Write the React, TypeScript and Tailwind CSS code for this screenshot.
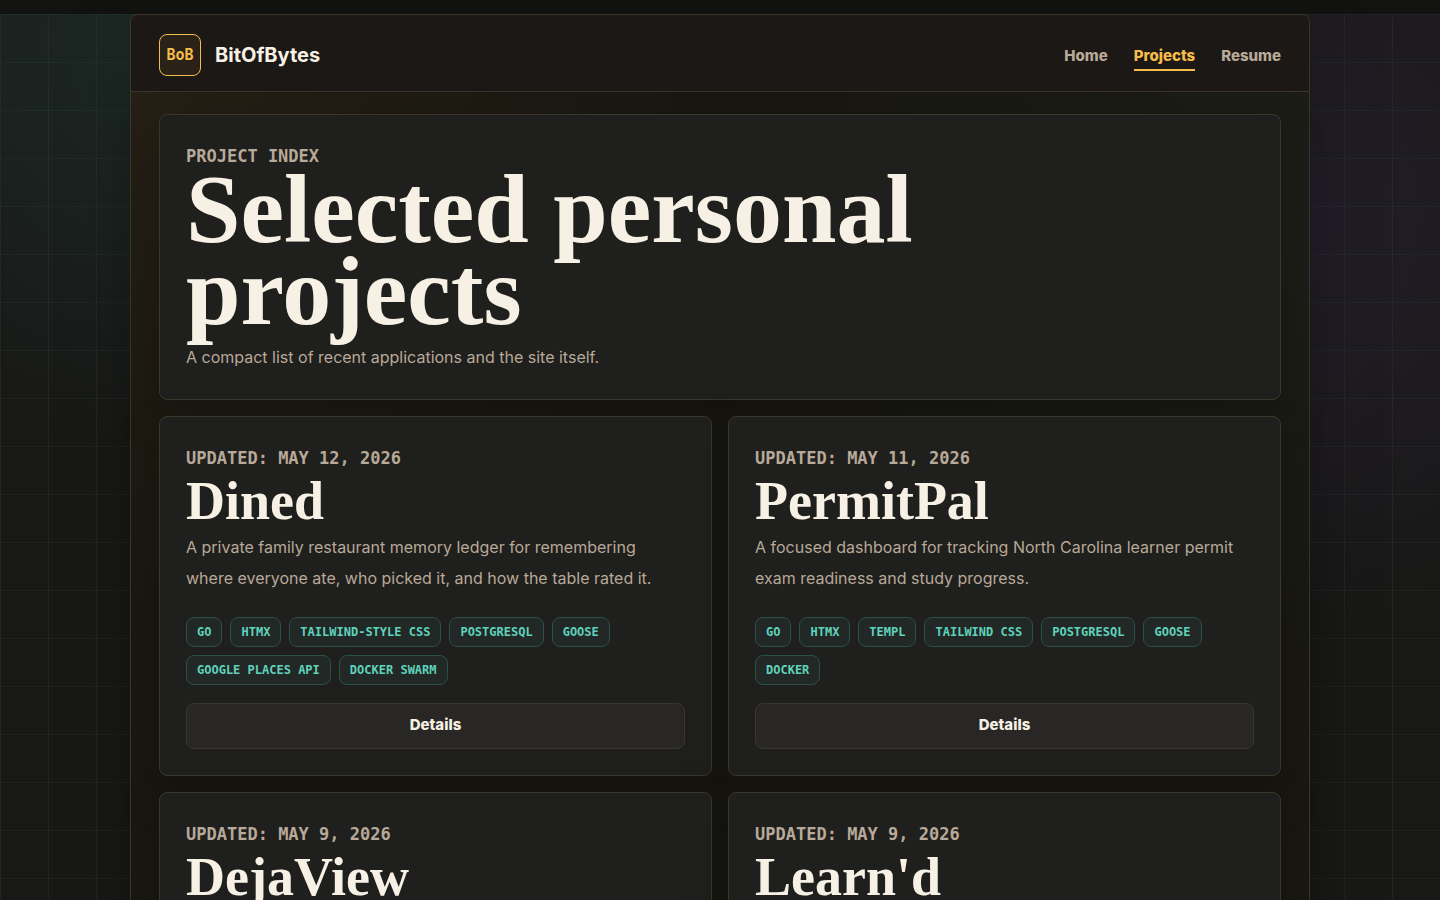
type Project = {
  name: string;
  updated: string;
  summary?: string;
  tags?: string[];
};

const projects: Project[] = [
  {
    name: "Dined",
    updated: "May 12, 2026",
    summary:
      "A private family restaurant memory ledger for remembering where everyone ate, who picked it, and how the table rated it.",
    tags: ["Go", "HTMX", "Tailwind-style CSS", "PostgreSQL", "Goose", "Google Places API", "Docker Swarm"],
  },
  {
    name: "PermitPal",
    updated: "May 11, 2026",
    summary: "A focused dashboard for tracking North Carolina learner permit exam readiness and study progress.",
    tags: ["Go", "HTMX", "Templ", "Tailwind CSS", "PostgreSQL", "Goose", "Docker"],
  },
  { name: "DejaView", updated: "May 9, 2026" },
  { name: "Learn'd", updated: "May 9, 2026" },
];

const nav = [
  { label: "Home", active: false },
  { label: "Projects", active: true },
  { label: "Resume", active: false },
];

const panel =
  "rounded-lg border border-[#3c352c] bg-[#1f1f1d] p-[26px] shadow-[0_18px_50px_rgba(0,0,0,0.2)]";
const label =
  "font-['DejaVu_Sans_Mono',monospace] text-[17px] leading-[31px] font-bold text-[#b8a998] uppercase";
const copy = "text-[16px] leading-[31px] text-[#b8a998]";

function Header() {
  return (
    <header className="flex items-center justify-between rounded-t-lg border-b border-[#3c352c] bg-[#1c1815] px-7 pt-[19px] pb-[15px]">
      <a href="#" className="flex items-center gap-3.5">
        <span className="flex size-[42px] items-center justify-center rounded-lg border border-[#f6bd4b] bg-[#2a2117] font-['DejaVu_Sans_Mono',monospace] text-[15px] font-bold text-[#f6bd4b]">
          BoB
        </span>
        <span className="text-[20px] font-bold text-[#f7f0e4]">BitOfBytes</span>
      </a>
      <nav className="flex gap-[26px] pt-1.5 text-[15px] leading-[22px] font-extrabold">
        {nav.map((item) => (
          <a
            key={item.label}
            href="#"
            aria-current={item.active ? "page" : undefined}
            className={
              item.active
                ? "border-b-2 border-[#f6bd4b] pb-0.5 text-[#f6bd4b]"
                : "border-b-2 border-transparent pb-0.5 text-[#b8a998]"
            }
          >
            {item.label}
          </a>
        ))}
      </nav>
    </header>
  );
}

function ProjectCard({ project }: { project: Project }) {
  return (
    <article className={`${panel} flex min-h-[360px] flex-col`}>
      <p className={label}>Updated: {project.updated}</p>
      <h2 className="mb-1 font-['Liberation_Serif',serif] text-[54px] leading-[54px] font-bold text-[#f7f0e4]">
        {project.name}
      </h2>
      {project.summary && <p className={copy}>{project.summary}</p>}
      {project.tags && (
        <ul className="mt-[23px] flex flex-wrap gap-2">
          {project.tags.map((tag) => (
            <li
              key={tag}
              className="rounded-lg border border-[#2b5049] bg-[#222826] px-2.5 font-['DejaVu_Sans_Mono',monospace] text-[12px] leading-7 font-bold text-[#5fd3bc] uppercase"
            >
              {tag}
            </li>
          ))}
        </ul>
      )}
      <a
        href="#"
        className="mt-[18px] rounded-lg border border-[#3c352c] bg-[#282725] pt-2.5 pb-3 text-center text-[15px] leading-[22px] font-extrabold text-[#f7f0e4]"
      >
        Details
      </a>
    </article>
  );
}

export default function App() {
  return (
    <div className="min-h-screen bg-[#121211] pt-3.5 font-['Inter','Liberation_Sans',sans-serif]">
      <div className="bg-[#181816] bg-[linear-gradient(90deg,rgba(246,189,75,0.06)_1px,transparent_1px),linear-gradient(rgba(95,211,188,0.05)_1px,transparent_1px),radial-gradient(circle_at_170px_30px,rgba(70,190,180,0.1),transparent_410px),radial-gradient(circle_at_1270px_200px,rgba(130,80,220,0.1),transparent_420px)] bg-[size:48px_48px,48px_48px,auto,auto]">
        <div className="mx-auto max-w-[1180px] rounded-t-lg border border-[#3c352c] bg-[#181711] bg-[radial-gradient(circle_at_0px_70px,rgba(246,160,75,0.06),transparent_560px),radial-gradient(circle_at_1180px_200px,rgba(110,150,130,0.05),transparent_500px)] shadow-[0_24px_80px_rgba(0,0,0,0.2)]">
          <Header />
          <main className="grid gap-4 px-7 py-[22px]">
            <section className={panel}>
              <p className={label}>Project index</p>
              <h1 className="-mt-1 mb-2.5 max-w-[900px] font-['Liberation_Serif',serif] text-[98px] leading-[82px] font-bold text-[#f7f0e4]">
                Selected personal projects
              </h1>
              <p className={copy}>A compact list of recent applications and the site itself.</p>
            </section>
            <section className="grid grid-cols-1 gap-4 md:grid-cols-2">
              {projects.map((project) => (
                <ProjectCard key={project.name} project={project} />
              ))}
            </section>
          </main>
        </div>
      </div>
    </div>
  );
}
